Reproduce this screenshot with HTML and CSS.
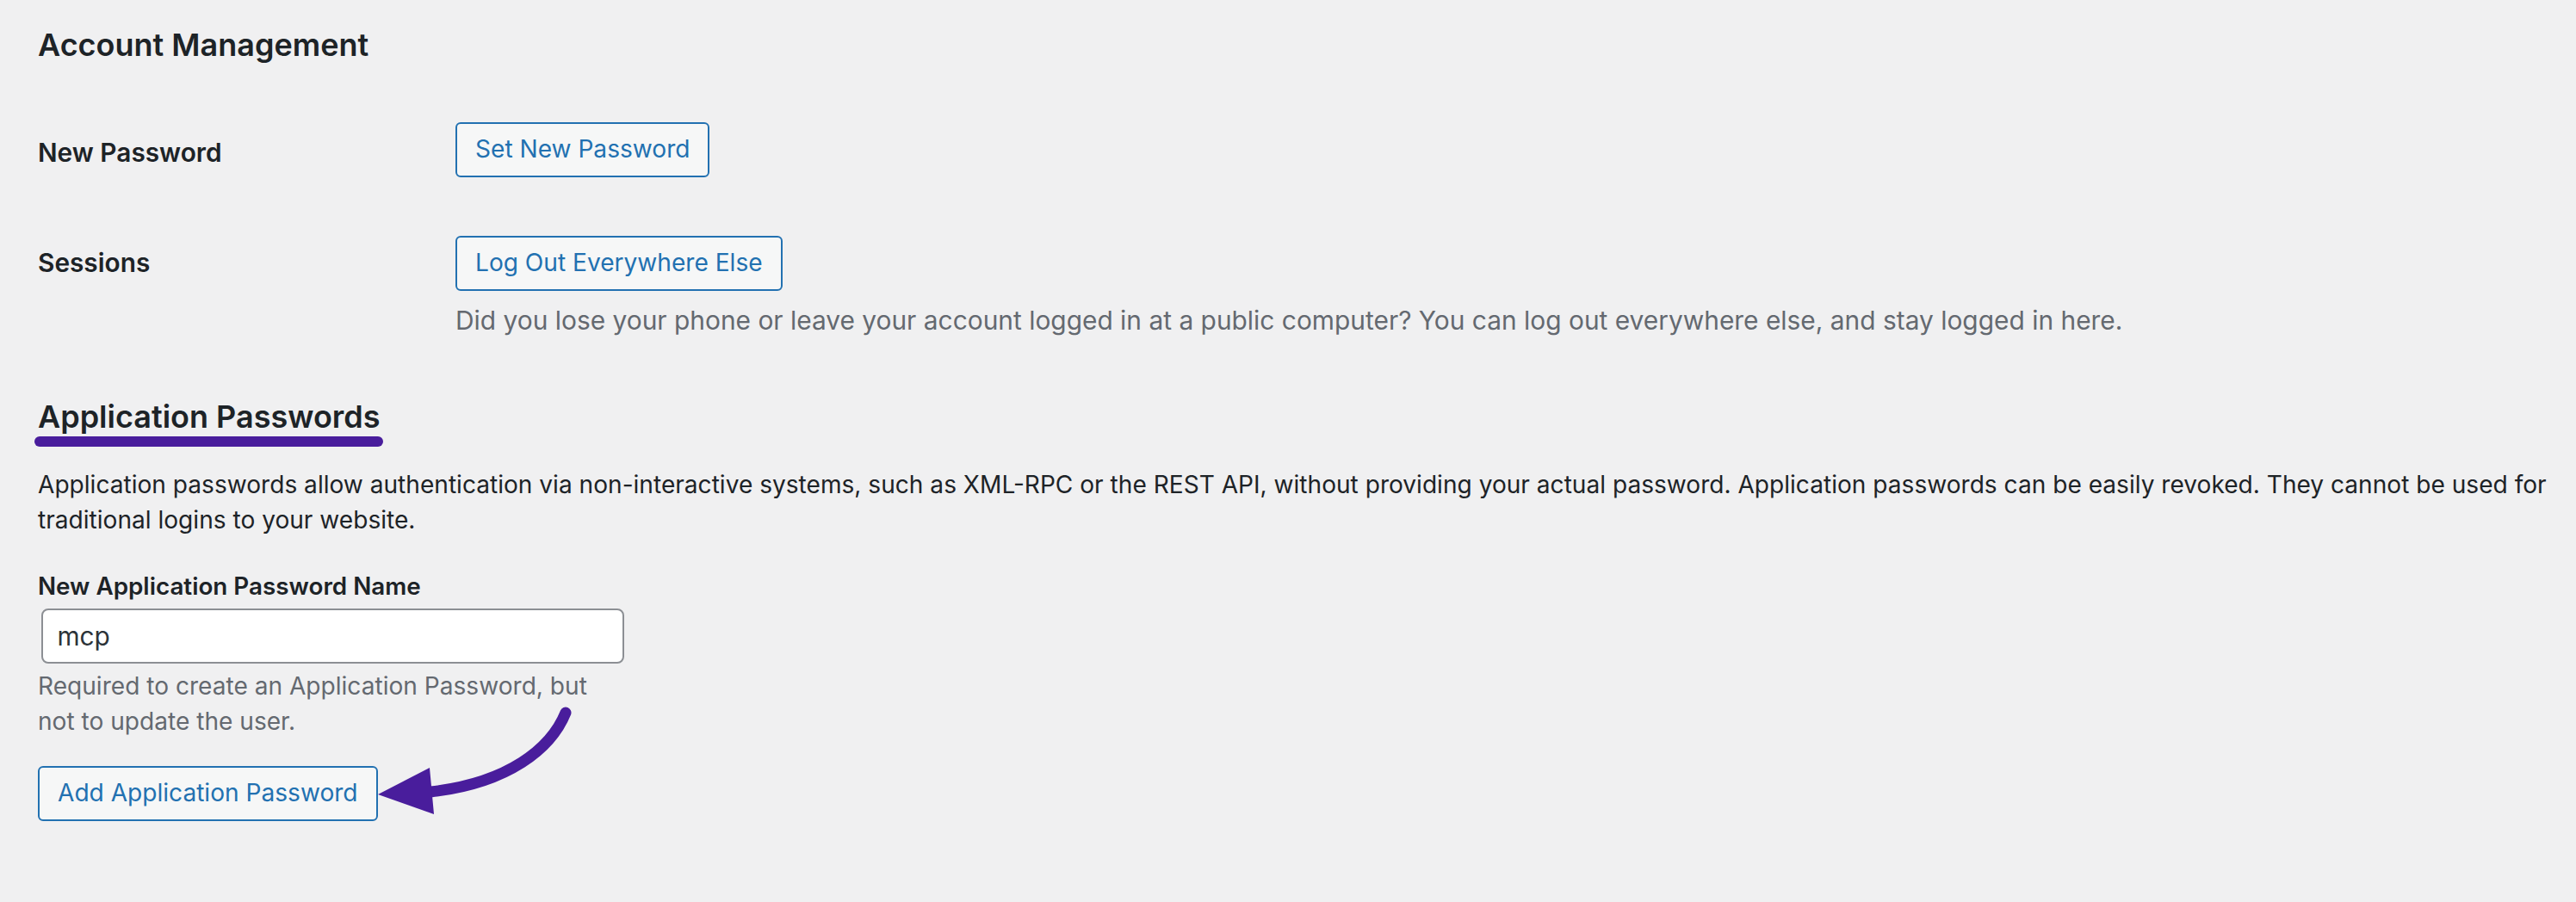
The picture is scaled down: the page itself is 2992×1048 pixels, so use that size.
FILE: index.html
```html
<!DOCTYPE html>
<html lang="en">
<head>
<meta charset="utf-8">
<title>Account Management</title>
<link rel="stylesheet" href="styles.css">
</head>
<body>
<div class="page">
  <h2 class="heading heading-account">Account Management</h2>

  <div class="form-table">
    <div class="row row-password">
      <div class="row-label">New Password</div>
      <div class="row-field">
        <button type="button" class="btn">Set New Password</button>
      </div>
    </div>
    <div class="row row-sessions">
      <div class="row-label">Sessions</div>
      <div class="row-field">
        <button type="button" class="btn">Log Out Everywhere Else</button>
        <p class="description">Did you lose your phone or leave your account logged in at a public computer? You can log out everywhere else, and stay logged in here.</p>
      </div>
    </div>
  </div>

  <section class="app-passwords">
    <h2 class="heading heading-app"><span class="marked">Application Passwords</span></h2>
    <p class="intro">Application passwords allow authentication via non-interactive systems, such as XML-RPC or the REST API, without providing your actual password. Application passwords can be easily revoked. They cannot be used for traditional logins to your website.</p>

    <div class="create">
      <label class="field-label" for="app-name">New Application Password Name</label>
      <input id="app-name" class="field-input" type="text" value="mcp">
      <p class="help">Required to create an Application Password, but not to update the user.</p>
      <button type="button" class="btn btn-add">Add Application Password</button>
    </div>

    <svg class="arrow" width="260" height="160" viewBox="0 0 260 160" aria-hidden="true">
      <path d="M236 18 C219 60 169 100 79 110" fill="none" stroke="#491d9c" stroke-width="13" stroke-linecap="round"/>
      <polygon points="18,113 78,82 83,136" fill="#491d9c"/>
    </svg>
  </section>
</div>
</body>
</html>
```

FILE: styles.css
```css
html, body {
  margin: 0;
  padding: 0;
  background: #f0f0f1;
}

body {
  font-family: Inter, "Noto Sans", "Liberation Sans", sans-serif;
  color: #1d2327;
  font-size: 27.7px;
  line-height: 1.5;
}

.page {
  position: relative;
  padding: 28px 0 0 44px;
}

.heading {
  margin: 0;
  font-size: 36px;
  line-height: 48px;
  font-weight: 600;
  color: #1d2327;
}

.form-table {
  margin-top: 66px;
  display: flex;
  flex-direction: column;
  gap: 68px;
}

.row {
  display: grid;
  grid-template-columns: 485px 1fr;
}

.row-label {
  font-size: 29.8px;
  line-height: 39px;
  font-weight: 600;
}

.row-password .row-label { padding-top: 16px; }
.row-sessions .row-label { padding-top: 11.6px; }

.btn {
  display: inline-block;
  box-sizing: border-box;
  height: 64px;
  margin: 0;
  padding: 0 21px;
  border: 2px solid #2271b1;
  border-radius: 6px;
  background: #f6f7f7;
  color: #2271b1;
  font-family: inherit;
  font-size: 28.1px;
  line-height: 59.6px;
  font-weight: 400;
  white-space: nowrap;
  vertical-align: top;
}

.row-field .btn { display: block; }

.description {
  margin: 11.8px 0 0;
  font-size: 29.9px;
  line-height: 44.7px;
  color: #646970;
}

.app-passwords {
  margin-top: 65.5px;
}

.heading-app {
  display: inline-block;
}

.marked {
  position: relative;
  display: inline-block;
}

.marked::after {
  content: "";
  position: absolute;
  left: -4px;
  right: -3px;
  top: 47px;
  height: 12px;
  border-radius: 6px;
  background: #491d9c;
}

.intro {
  margin: 34px 0 0;
  max-width: 2930px;
  font-size: 28.1px;
  line-height: 41.6px;
  color: #1d2327;
}

.create {
  margin-top: 34.8px;
  display: flex;
  flex-direction: column;
  align-items: flex-start;
}

.field-label {
  display: block;
  font-size: 27.8px;
  line-height: 41.6px;
  font-weight: 600;
}

.field-input {
  box-sizing: border-box;
  width: 677px;
  height: 64px;
  margin: 4.4px 0 0 3.5px;
  padding: 0 17px;
  border: 2px solid #8c8f94;
  border-radius: 8px;
  background: #fff;
  color: #2c3338;
  font-family: inherit;
  font-size: 29.8px;
  line-height: 60px;
  outline: none;
}

.help {
  margin: 6px 0 0;
  width: 660px;
  font-size: 28.1px;
  line-height: 41.6px;
  color: #646970;
}

.btn-add {
  margin-top: 29.8px;
}

.arrow {
  position: absolute;
  left: 421px;
  top: 810px;
  overflow: visible;
}
```
